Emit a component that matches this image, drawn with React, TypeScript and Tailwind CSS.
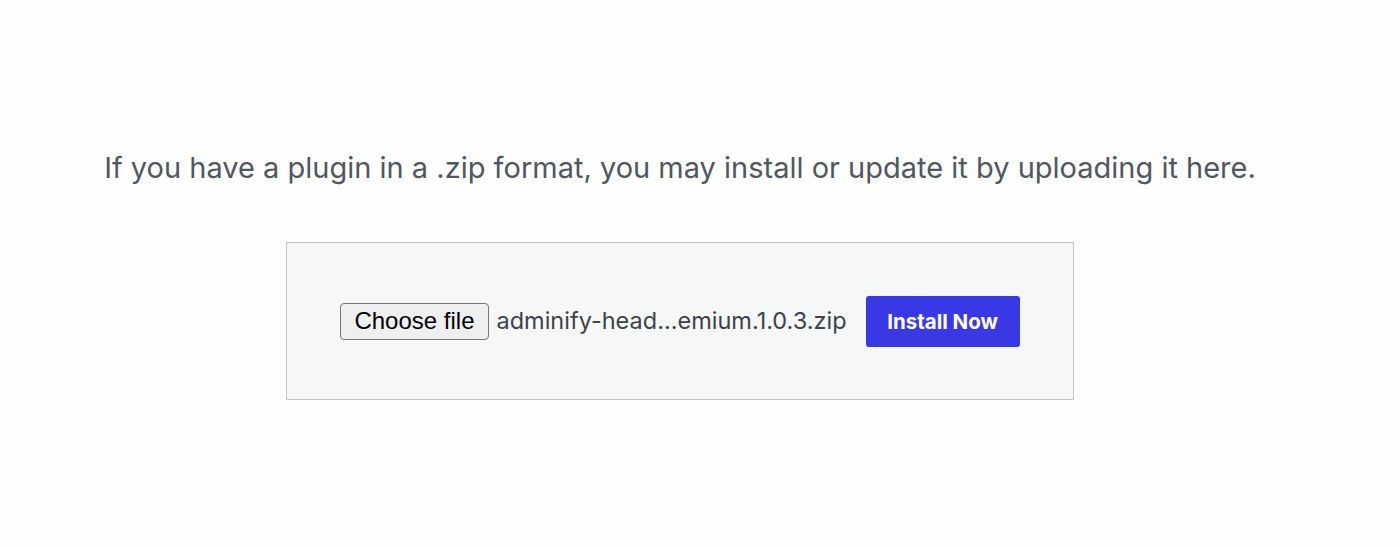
import React from 'react';

export default function App() {
  return (
    <div className="w-[1400px] h-[547px] bg-[#fefefe] pr-[40px]" style={{ fontFamily: 'Inter, "Liberation Sans", sans-serif' }}>
      <div className="flex flex-col items-center pt-[148px]">
        <p className="text-[29px] leading-[40px] text-[#50575e]">
          If you have a plugin in a .zip format, you may install or update it by uploading it here.
        </p>

        {/* Upload box */}
        <div className="mt-[54px] w-[788px] h-[158px] border border-[#c3c4c7] bg-[#f6f7f7] flex items-center justify-center gap-[19px]">
          <div className="flex items-center gap-[8px]">
            <span className="h-[37px] px-[13px] flex items-center border border-[#767676] rounded-[4px] bg-[#efefef] text-[24px] text-black" style={{ fontFamily: '"Liberation Sans", Arial, sans-serif' }}>
              Choose file
            </span>
            <span className="text-[23.5px] text-[#3c434a]">adminify-head...emium.1.0.3.zip</span>
          </div>
          <button className="h-[51px] w-[154px] rounded-[3px] bg-[#3838e5] text-white font-bold text-[20.5px] pt-[2px]">
            Install Now
          </button>
        </div>
      </div>
    </div>
  );
}
